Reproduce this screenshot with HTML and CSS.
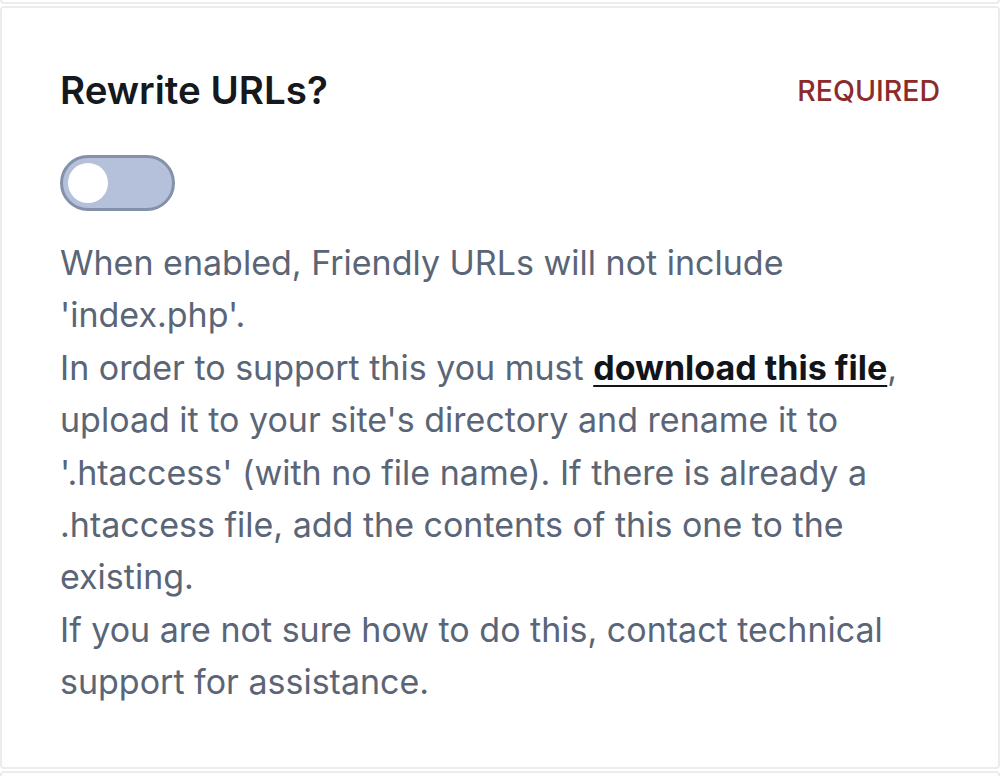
FILE: index.html
```html
<!DOCTYPE html>
<html>
<head>
<meta charset="utf-8">
<link rel="stylesheet" href="styles.css">
</head>
<body>
<div class="card card-prev"></div>
<div class="card card-main">
  <div class="header">
    <h2 class="title">Rewrite URLs?</h2>
    <span class="required">REQUIRED</span>
  </div>
  <div class="toggle"><span class="knob"></span></div>
  <p class="desc">When enabled, Friendly URLs will not include 'index.php'.<br>In order to support this you must <a class="link" href="#">download this file</a>, upload it to your site's directory and rename it to '.htaccess' (with no file name). If there is already a .htaccess file, add the contents of this one to the existing.<br>If you are not sure how to do this, contact technical support for assistance.</p>
</div>
<div class="card card-next"></div>
</body>
</html>
```
FILE: styles.css
```css
html, body {
  margin: 0;
  padding: 0;
  background: #ffffff;
}
body {
  font-family: Inter, "Noto Sans", sans-serif;
  overflow: hidden;
}
.card {
  background: #ffffff;
  border: 2px solid #ececec;
  border-radius: 4px;
  box-sizing: border-box;
}
.card-prev {
  height: 4px;
  border-top: none;
  border-radius: 0 0 4px 4px;
}
.card-main {
  margin-top: 2px;
  height: 763px;
  padding: 0 58px;
}
.card-next {
  margin-top: 2px;
  height: 20px;
}
.header {
  display: flex;
  justify-content: space-between;
  align-items: center;
  height: 62px;
  margin-top: 51px;
}
.title {
  margin: 0;
  font-size: 38.5px;
  font-weight: 600;
  color: #15181d;
}
.required {
  font-size: 28.5px;
  font-weight: 500;
  color: #8c2b2b;
}
.toggle {
  margin-top: 34px;
  width: 115px;
  height: 56px;
  box-sizing: border-box;
  border: 3px solid #8391a9;
  border-radius: 28px;
  background: #b5c1da;
  padding: 5px;
}
.knob {
  display: block;
  width: 40px;
  height: 40px;
  border-radius: 50%;
  background: #ffffff;
}
.desc {
  margin: 26px 0 0 0;
  font-size: 34px;
  line-height: 52.4px;
  color: #5a6577;
}
.link {
  color: #111418;
  font-weight: 700;
  text-decoration: underline;
  text-underline-offset: 5px;
  text-decoration-thickness: 2px;
}
```
